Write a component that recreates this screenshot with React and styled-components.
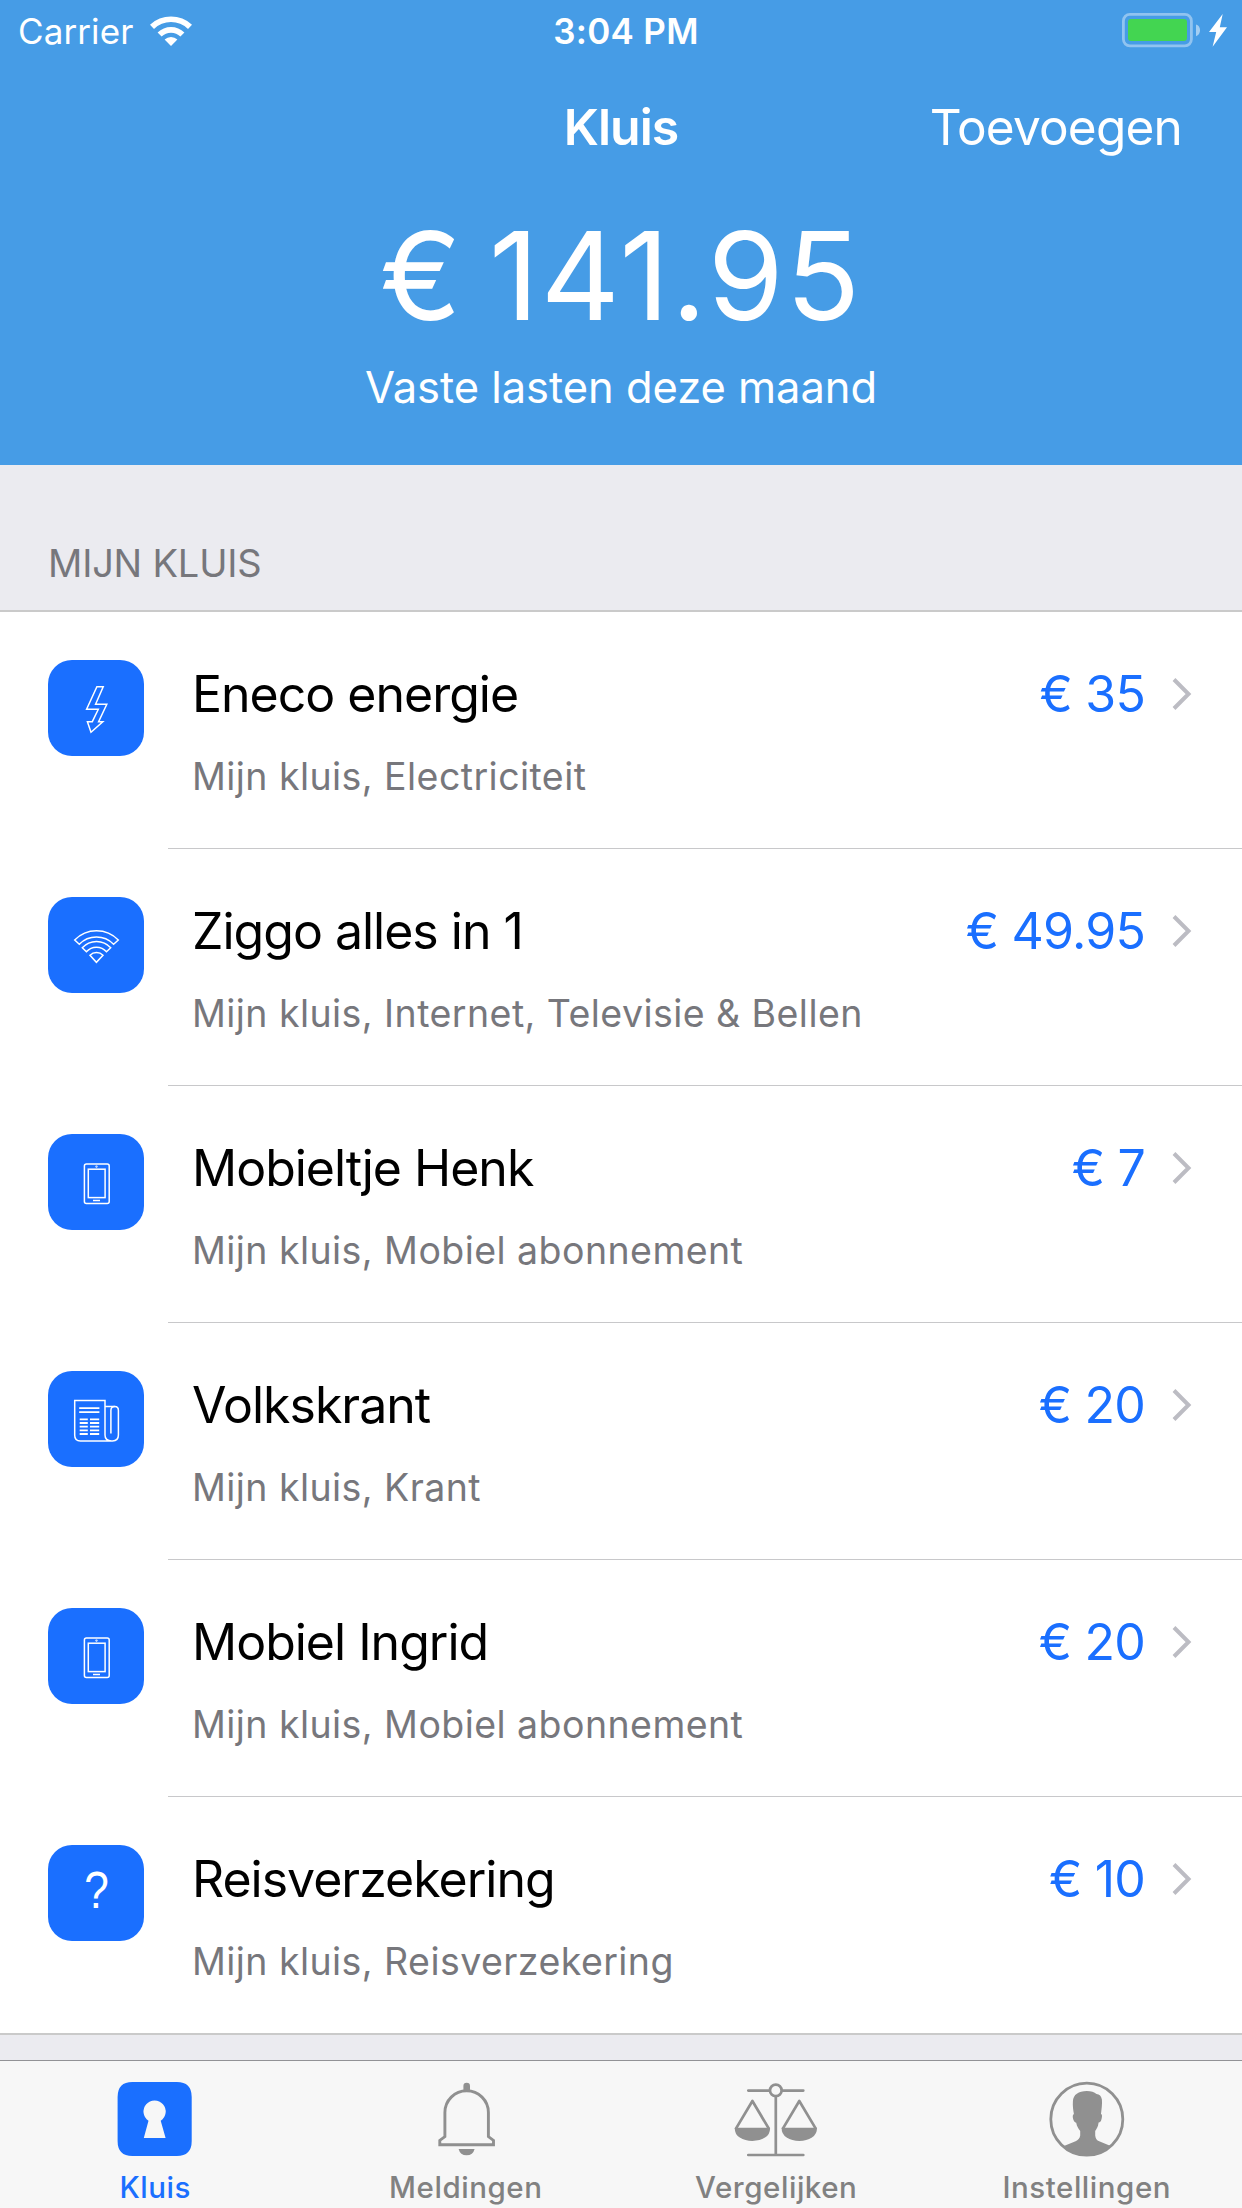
import React, { useState } from "react";
import styled, { createGlobalStyle } from "styled-components";

const items = [
  { id: 1, icon: "bolt", title: "Eneco energie", sub: "Mijn kluis, Electriciteit", price: "€ 35" },
  { id: 2, icon: "wifi", title: "Ziggo alles in 1", sub: "Mijn kluis, Internet, Televisie & Bellen", price: "€ 49.95" },
  { id: 3, icon: "phone", title: "Mobieltje Henk", sub: "Mijn kluis, Mobiel abonnement", price: "€ 7" },
  { id: 4, icon: "paper", title: "Volkskrant", sub: "Mijn kluis, Krant", price: "€ 20" },
  { id: 5, icon: "phone", title: "Mobiel Ingrid", sub: "Mijn kluis, Mobiel abonnement", price: "€ 20" },
  { id: 6, icon: "unknown", title: "Reisverzekering", sub: "Mijn kluis, Reisverzekering", price: "€ 10" },
];

const tileIcons = {
  bolt: (
    <path d="M48.9 26.7H55.2L47.6 44.3H58.8L50.6 61.7H54.8L43 72.3L39.4 61.7H44.3L50.3 49.3H38.6Z" />
  ),
  wifi: (
    <>
      <path d="M26.7 43A30.2 30.2 0 0 1 70.3 43L65.6 47.3A24 24 0 0 0 31.3 47.3Z" />
      <path d="M34.3 50.7A19.2 19.2 0 0 1 62.7 50.7L58.5 54.7A13.5 13.5 0 0 0 38.4 54.7Z" />
      <path d="M42 58.2A9.2 9.2 0 0 1 55 58.2L48.4 65.3Z" />
    </>
  ),
  phone: (
    <>
      <rect x="36.4" y="29.9" width="24.8" height="39.6" rx="2" />
      <rect x="40.3" y="35.2" width="16.8" height="28.4" />
      <path d="M45 66.5H52" />
      <circle cx="48.5" cy="32.6" r="0.4" />
    </>
  ),
  paper: (
    <>
      <path d="M57 35.5V29.5H26.7V64.2Q26.7 69.9 32.4 69.9H64.5Q70.4 69.9 70.4 64V39.4Q70.4 35.6 66.8 35.6H57V64Q57 69.9 63.6 69.9" />
      <path d="M66.8 35.6Q62.9 35.6 62.9 39.6V62.4" />
      <path strokeWidth="1.8" d="M31.2 37.2H51.4M31.2 41.2H51.4" />
      <path
        strokeWidth="1.8"
        d="M31.7 48.4H39.8M31.7 52H39.8M31.7 55.7H39.8M31.7 59.4H39.8M31.7 63H39.8M42 48.4H51.2M42 52H51.2M42 55.7H51.2M42 59.4H51.2M42 63H51.2"
      />
    </>
  ),
};

const tabs = [
  {
    id: "kluis",
    label: "Kluis",
    icon: (
      <path
        fillRule="evenodd"
        d="M16.4 2H60.8Q75.7 2 75.7 17V61Q75.7 76 60.8 76H16.4Q1.6 76 1.6 61V17Q1.6 2 16.4 2ZM32.5 40.8L27.8 58H49.6L44.7 40.8A11.1 11.1 0 1 0 32.5 40.8Z"
      />
    ),
  },
  {
    id: "meldingen",
    label: "Meldingen",
    icon: (
      <>
        <path
          fill="none"
          stroke="currentColor"
          strokeWidth="2.9"
          d="M12.8 64.8V60.4L17.9 56.6V32.5A21.75 21.75 0 0 1 61.4 32.5V56.6L66.5 60.4V64.8Z"
        />
        <path d="M36.4 11.5V6A3.3 3.3 0 0 1 43 6V11.5Z" />
        <path d="M31.6 69H47.6Q46 75.3 39.6 75.3Q33.2 75.3 31.6 69Z" />
      </>
    ),
  },
  {
    id: "vergelijken",
    label: "Vergelijken",
    icon: (
      <>
        <g fill="none" stroke="currentColor" strokeWidth="2.7" strokeLinecap="round" strokeLinejoin="round">
          <path d="M11.3 10.6H32.3M45.3 10.6H66.3M38.8 17.4V74.8M11.3 75H66.3" />
          <circle cx="38.8" cy="10.4" r="5.8" />
          <path d="M-0.9 48.4L15.4 21L31.7 48.4M46 48.4L62.3 21L78.6 48.4" />
        </g>
        <path d="M-2.2 47.8H33Q33.4 54 28 57.6Q22.8 61 15.4 61Q8 61 2.8 57.6Q-2.6 54 -2.2 47.8Z" />
        <path d="M44.7 47.8H79.9Q80.3 54 74.9 57.6Q69.7 61 62.3 61Q54.9 61 49.7 57.6Q44.3 54 44.7 47.8Z" />
      </>
    ),
  },
  {
    id: "instellingen",
    label: "Instellingen",
    icon: (
      <>
        <circle cx="38.8" cy="39.2" r="36" fill="none" stroke="currentColor" strokeWidth="2.8" />
        <path d="M38.8 11C43 11 46.4 12 48.5 14C51.5 14 53.3 16.2 53.9 19.5C54.4 24 53.4 30 53 34C54.3 34.4 54.2 36.4 53.6 38.8C53.2 41.2 52.2 42.4 50.6 42.6C50 47 48.8 49 47.2 51V55.5C47.6 58.6 48.6 60 50.6 61L62.7 66Q53 76 38.8 76Q25 76 15.9 66L27.6 61.2C30 60 31.8 58.4 32.2 55.5V51C30.4 48.6 28.8 46.4 28.2 42.8C26.4 42.4 25.6 41 25 38.6C24.6 36.4 24.6 34.6 25.9 34C25.2 30 24.6 26 24.9 21.5C25.2 14.5 30.6 11 38.8 11Z" />
      </>
    ),
  },
];

function StatusBar() {
  return (
    <Status>
      <Carrier>
        Carrier
        <svg width="42" height="30" viewBox="0 0 42 30" fill="#fff">
          <path d="M0 8.8A30.5 30.5 0 0 1 42 8.8L38 12.9A24.4 24.4 0 0 0 4 12.9Z" />
          <path d="M7.6 16.5A19.2 19.2 0 0 1 34.4 16.5L30.4 20.5A13.4 13.4 0 0 0 11.6 20.5Z" />
          <path d="M14.6 23.6A9.4 9.4 0 0 1 27.4 23.6L21 30Z" />
        </svg>
      </Carrier>
      <Clock>3:04 PM</Clock>
      <Battery>
        <svg width="106" height="36" viewBox="0 0 106 36">
          <rect x="1.4" y="1.4" width="68" height="31.4" rx="6.5" fill="none" stroke="#fff" strokeOpacity="0.4" strokeWidth="2.8" />
          <rect x="6" y="6" width="59" height="22" rx="3.2" fill="#43d551" />
          <path d="M74 11.4Q78 12.6 78 17.2Q78 21.8 74 23.2Z" fill="#fff" fillOpacity="0.5" />
          <path d="M100.7 1L87 19.1H94.2L90.6 33.8L105 14.2H97.8Z" fill="#fff" />
        </svg>
      </Battery>
    </Status>
  );
}

export default function App() {
  const [activeTab, setActiveTab] = useState("kluis");

  return (
    <Screen>
      <GlobalStyle />
      <Header>
        <StatusBar />
        <NavBar>
          <NavTitle>Kluis</NavTitle>
          <AddButton>Toevoegen</AddButton>
        </NavBar>
        <Total>€ 141.95</Total>
        <Caption>Vaste lasten deze maand</Caption>
      </Header>

      <Content>
        <SectionTitle>MIJN KLUIS</SectionTitle>
        <List>
          {items.map((item) => (
            <Row key={item.id}>
              <Tile>
                {tileIcons[item.icon] ? (
                  <svg width="96" height="96" viewBox="0 0 96 96">
                    {tileIcons[item.icon]}
                  </svg>
                ) : (
                  <span>?</span>
                )}
              </Tile>
              <RowBody>
                <Info>
                  <h2>{item.title}</h2>
                  <p>{item.sub}</p>
                </Info>
                <Price>{item.price}</Price>
                <Chevron width="20" height="34" viewBox="0 0 20 34">
                  <path d="M2 2.5L16.5 17L2 31.5" />
                </Chevron>
              </RowBody>
            </Row>
          ))}
        </List>
      </Content>

      <TabBar>
        {tabs.map((tab) => (
          <Tab
            key={tab.id}
            $active={tab.id === activeTab}
            onClick={() => setActiveTab(tab.id)}
          >
            <svg width="84" height="78" viewBox="-3 0 84 78" fill="currentColor">
              {tab.icon}
            </svg>
            <span>{tab.label}</span>
          </Tab>
        ))}
      </TabBar>
    </Screen>
  );
}

const GlobalStyle = createGlobalStyle`
  * {
    box-sizing: border-box;
  }

  body {
    margin: 0;
    font-family: Inter, "Liberation Sans", sans-serif;
    background-color: #ebebf0;
  }

  h1, h2, p, ul {
    margin: 0;
    padding: 0;
    font-weight: 400;
  }

  button {
    padding: 0;
    border: none;
    background: none;
    font-family: inherit;
  }
`;

const Screen = styled.div`
  display: flex;
  flex-direction: column;
  width: 1242px;
  height: 2208px;
  overflow: hidden;
`;

const Header = styled.header`
  height: 465px;
  flex-shrink: 0;
  background-color: #469ce6;
  color: #fff;
  text-align: center;
`;

const Status = styled.div`
  display: grid;
  grid-template-columns: 1fr auto 1fr;
  align-items: center;
  height: 62px;
  padding: 0 14px 0 18px;
  font-size: 35px;
`;

const Carrier = styled.div`
  display: flex;
  align-items: center;
  gap: 17px;
  letter-spacing: 0.1px;
`;

const Clock = styled.div`
  padding-left: 6px;
  font-weight: 600;
  letter-spacing: 0.3px;
`;

const Battery = styled.div`
  display: flex;
  justify-content: flex-end;
`;

const NavBar = styled.div`
  display: grid;
  grid-template-columns: 1fr auto 1fr;
  align-items: center;
  height: 130px;
  padding: 0 60px;
`;

const NavTitle = styled.h1`
  grid-column: 2;
  font-size: 50px;
  font-weight: 600;
  letter-spacing: -1px;
`;

const AddButton = styled.button`
  justify-self: end;
  color: #fff;
  font-size: 49.5px;
  letter-spacing: -0.8px;
`;

const Total = styled.div`
  height: 167px;
  line-height: 167px;
  font-size: 122.5px;
  letter-spacing: 2px;
  word-spacing: -11px;
`;

const Caption = styled.div`
  height: 57px;
  line-height: 57px;
  font-size: 43.5px;
  letter-spacing: -0.05px;
`;

const Content = styled.main`
  flex: 1;
`;

const SectionTitle = styled.div`
  height: 145px;
  padding: 75px 48px 0;
  color: #77777c;
  font-size: 38px;
  line-height: 47px;
  letter-spacing: -0.2px;
`;

const List = styled.ul`
  border-top: 2px solid #cacaca;
  border-bottom: 2px solid #cacaca;
  background-color: #fff;
  list-style: none;
`;

const RowBody = styled.div`
  display: flex;
  flex: 1;
  padding: 52px 50px 0 24px;
  border-bottom: 1px solid #c8c8ca;
`;

const Row = styled.li`
  display: flex;
  gap: 24px;
  height: 237px;
  padding-left: 48px;

  &:last-child {
    height: 236px;

    ${RowBody} {
      border-bottom: none;
    }
  }
`;

const Tile = styled.div`
  width: 96px;
  height: 96px;
  margin-top: 48px;
  border-radius: 24px;
  background-color: #1a6fff;
  color: #fff;
  text-align: center;

  svg {
    display: block;
    fill: none;
    stroke: #fff;
    stroke-width: 1.5;
  }

  span {
    display: inline-block;
    font-family: "Liberation Sans", sans-serif;
    font-size: 52px;
    line-height: 90px;
    transform: scaleX(0.85);
  }
`;

const Info = styled.div`
  flex: 1;

  h2 {
    color: #000;
    font-size: 50px;
    line-height: 60px;
    letter-spacing: -1px;
  }

  p {
    margin-top: 27px;
    color: #77777c;
    font-size: 37.5px;
    line-height: 52px;
    letter-spacing: 0.44px;
  }
`;

const Price = styled.div`
  color: #1a6fff;
  font-size: 50px;
  line-height: 60px;
  letter-spacing: -0.8px;
`;

const Chevron = styled.svg`
  margin: 13px 0 0 27px;
  fill: none;
  stroke: #bcbcc3;
  stroke-width: 4;
`;

const TabBar = styled.nav`
  display: grid;
  grid-template-columns: repeat(4, 1fr);
  height: 148px;
  border-top: 1px solid #929296;
  background-color: #f7f7f7;
`;

const Tab = styled.button`
  display: flex;
  flex-direction: column;
  align-items: center;
  padding-top: 19px;
  color: ${({ $active }) => ($active ? "#1a6fff" : "#909090")};

  span {
    margin-top: 11px;
    color: ${({ $active }) => ($active ? "#1a6fff" : "#818181")};
    font-size: 29.5px;
    font-weight: 500;
    line-height: 36px;
    letter-spacing: 0.55px;
  }
`;
